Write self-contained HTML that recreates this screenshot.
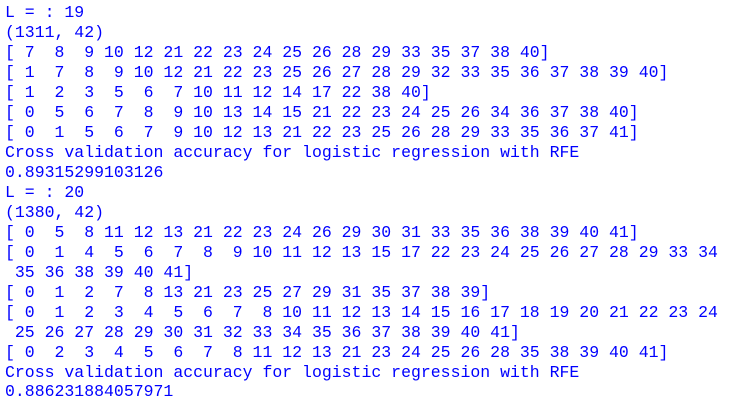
<!DOCTYPE html>
<html><head><meta charset="utf-8"><style>
html,body{margin:0;padding:0;background:#fff;width:737px;height:404px;overflow:hidden;position:relative}
div{position:absolute;left:5px;height:20px;line-height:20px;font-family:"Liberation Mono",monospace;font-size:16.5px;color:#0000ff;white-space:pre}
</style></head><body>
<div style="top:3px">L = : 19</div>
<div style="top:23px">(1311, 42)</div>
<div style="top:43px">[ 7  8  9 10 12 21 22 23 24 25 26 28 29 33 35 37 38 40]</div>
<div style="top:63px">[ 1  7  8  9 10 12 21 22 23 25 26 27 28 29 32 33 35 36 37 38 39 40]</div>
<div style="top:83px">[ 1  2  3  5  6  7 10 11 12 14 17 22 38 40]</div>
<div style="top:103px">[ 0  5  6  7  8  9 10 13 14 15 21 22 23 24 25 26 34 36 37 38 40]</div>
<div style="top:123px">[ 0  1  5  6  7  9 10 12 13 21 22 23 25 26 28 29 33 35 36 37 41]</div>
<div style="top:143px">Cross validation accuracy for logistic regression with RFE</div>
<div style="top:163px">0.89315299103126</div>
<div style="top:183px">L = : 20</div>
<div style="top:203px">(1380, 42)</div>
<div style="top:223px">[ 0  5  8 11 12 13 21 22 23 24 26 29 30 31 33 35 36 38 39 40 41]</div>
<div style="top:243px">[ 0  1  4  5  6  7  8  9 10 11 12 13 15 17 22 23 24 25 26 27 28 29 33 34</div>
<div style="top:263px"> 35 36 38 39 40 41]</div>
<div style="top:283px">[ 0  1  2  7  8 13 21 23 25 27 29 31 35 37 38 39]</div>
<div style="top:303px">[ 0  1  2  3  4  5  6  7  8 10 11 12 13 14 15 16 17 18 19 20 21 22 23 24</div>
<div style="top:323px"> 25 26 27 28 29 30 31 32 33 34 35 36 37 38 39 40 41]</div>
<div style="top:343px">[ 0  2  3  4  5  6  7  8 11 12 13 21 23 24 25 26 28 35 38 39 40 41]</div>
<div style="top:363px">Cross validation accuracy for logistic regression with RFE</div>
<div style="top:382px">0.886231884057971</div>
</body></html>
